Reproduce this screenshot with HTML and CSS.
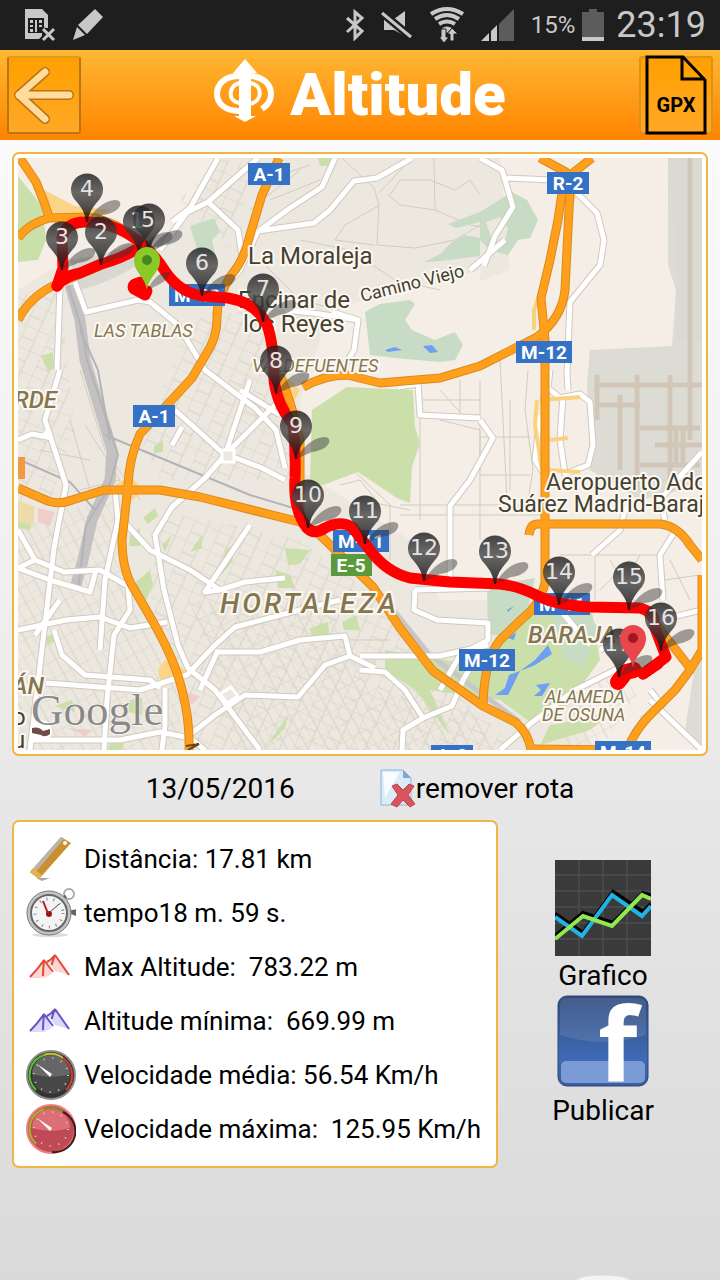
FILE: index.html
```
<!DOCTYPE html>
<html lang="pt">
<head>
    <meta charset="UTF-8">
    <meta name="viewport" content="width=device-width, initial-scale=1.0">
    <title>Altitude</title>
    <link rel="stylesheet" href="styles.css">
</head>
<body>
    <div class="status-bar">
        <div class="status-group">
            <svg class="status-icon" viewBox="0 0 32 34" aria-hidden="true">
                <path d="M1 1h17l6 6v13h-6v8l-3 3H1z" fill="#c8c8c8"/>
                <path d="M4 10h16v15H4z" fill="#1e1e1e"/>
                <path d="M6 12h3v3H6zm0 5h3v2H6zm0 4h3v3H6zm5-9h2v12h-2zm4 0h3v3h-3zm0 5h3v2h-3z" fill="#c8c8c8"/>
                <path d="M19 21l11 11M30 21L19 32" stroke="#1e1e1e" stroke-width="5"/>
                <path d="M19 21l11 11M30 21L19 32" stroke="#c8c8c8" stroke-width="3"/>
            </svg>
            <svg class="status-icon" viewBox="0 0 32 34" aria-hidden="true">
                <path d="M23 1l8 8-16 17-9-9zM5 19l8 8-12 5z" fill="#c8c8c8"/>
            </svg>
        </div>
        <div class="status-group status-right">
            <svg width="20" height="32" viewBox="0 0 20 32" aria-hidden="true">
                <path d="M2 9l15 13-7 7V3l7 6L2 23" fill="none" stroke="#c8c8c8" stroke-width="3"/>
            </svg>
            <svg width="32" height="34" viewBox="0 0 32 34" aria-hidden="true">
                <path d="M3 11h10L24 3v25L13 22H3z" fill="#c8c8c8"/>
                <path d="M0 4l31 26" stroke="#1e1e1e" stroke-width="8"/>
                <path d="M1 5l29 24" stroke="#c8c8c8" stroke-width="3"/>
            </svg>
            <svg width="36" height="38" viewBox="0 0 36 38" aria-hidden="true">
                <path d="M2 8q16-10 32 0M6 13q12-8 24 0M10 18q8-5 16 0" fill="none" stroke="#c8c8c8" stroke-width="4"/>
                <path d="M13 22q5-3 10 0l-5 5z" fill="#c8c8c8"/>
                <path d="M12 23h5v8h3l-5 6-5-6h2zM21 35v-7h-3l5-6 6 6h-4v7z" fill="#c8c8c8" stroke="#1e1e1e"/>
            </svg>
            <svg width="34" height="34" viewBox="0 0 34 34" aria-hidden="true">
                <path d="M18 16L33 1v32H18z" fill="#5c5c5c"/>
                <path d="M0 33l8-8v8zM10 23l6-6v16h-6z" fill="#c8c8c8"/>
            </svg>
            <span class="battery-level">15%</span>
            <svg width="22" height="34" viewBox="0 0 22 34" aria-hidden="true">
                <path d="M7 1h8v3h7v26H0V4h7z" fill="#5c5c5c"/>
                <path d="M0 29h22v4H0z" fill="#c8c8c8"/>
            </svg>
            <span class="clock">23:19</span>
        </div>
    </div>

    <header class="header">
        <button class="header-button" type="button" aria-label="Voltar">
            <svg width="62" height="60" viewBox="0 0 62 60" aria-hidden="true">
                <path d="M32 7L6 30l26 24M6 30h50" fill="none" stroke="#b87415" stroke-width="10" stroke-linejoin="round" stroke-linecap="round"/>
                <path d="M32 7L6 30l26 24M6 30h50" fill="none" stroke="#ffdb9c" stroke-width="7" stroke-linejoin="round" stroke-linecap="round"/>
            </svg>
        </button>
        <div class="brand">
            <svg width="60" height="64" viewBox="0 0 60 64" aria-hidden="true">
                <path d="M31 0l12 14h-6v43h5l-11 6-11-6h5V14h-6z" fill="#fff"/>
                <path d="M25 17C11 17 3 25 3 35c0 10 9 17 22 17M37 17c12 1 20 8 20 18 0 6-3 11-9 15" fill="none" stroke="#fff" stroke-width="6"/>
                <path d="M26 24c-12 2-13 19 0 20M36 24c13 2 13 18 0 21" fill="none" stroke="#fff" stroke-width="4"/>
            </svg>
            <h1>Altitude</h1>
        </div>
        <button class="header-button gpx-button" type="button" aria-label="GPX">
            <svg width="62" height="80" viewBox="0 0 62 80" aria-hidden="true">
                <path d="M2 2h36l22 23v53H2zM37 2v22h23" fill="none" stroke="#000" stroke-width="3"/>
                <text class="gpx-label" x="31" y="57">GPX</text>
            </svg>
        </button>
    </header>

    <main>
        <div class="map-frame">
            <svg class="map" viewBox="18 158 684 592" role="img" aria-label="Mapa da rota">
                <defs>
                    <linearGradient id="pin-fill" x1="0" y1="0" x2="0" y2="1">
                        <stop offset="0" stop-color="#1c1c1c"/>
                        <stop offset="0.4" stop-color="#4a4a4a"/>
                        <stop offset="1" stop-color="#0c0c0c"/>
                    </linearGradient>
                    <pattern id="blocks" width="26" height="22" patternUnits="userSpaceOnUse" patternTransform="rotate(24)">
                        <path d="M0 0h26M0 12h14M0 0v22M14 0v22" fill="none" stroke="#d8d1c6" stroke-width="1"/>
                    </pattern>
                    <pattern id="dense" width="18" height="16" patternUnits="userSpaceOnUse" patternTransform="rotate(-28)">
                        <path d="M0 0h18M0 0v16M10 0v16" fill="none" stroke="#d8d1c6" stroke-width="1"/>
                    </pattern>
                    <g id="pin">
                        <path d="M0 33C6 22 16 12 28 11c10 0 6 13-12 15z" fill="#333" opacity="0.45"/>
                        <path d="M-1 33C-2 23-6 18-11 12a16 16 0 1 1 22 0C6 18 2 23 1 33z" fill="url(#pin-fill)" opacity="0.82"/>
                    </g>
                    <g id="streets">
                        <path d="M218 158L190 208L160 250M258 158L208 202L188 212M208 202L238 230L243 262M190 208L172 222"/>
                        <path d="M335 158L322 187L290 208L260 230M412 158L377 178L354 181L330 210L314 223L258 231M258 231L240 270L222 290"/>
                        <path d="M75 282L86 312L138 300L150 302L178 325L205 370L255 408L276 430L285 468M60 286L57 370M60 370L45 420L66 485L54 548L30 750"/>
                        <path d="M18 440L32 434L52 438M44 432L50 438"/>
                        <path d="M250 380L225 455L205 478L172 507L155 535L164 590L178 645L188 668L215 690L260 750"/>
                        <path d="M172 445L182 427M228 455L262 468L285 480M175 410L225 455M280 400L225 455M240 390L280 415"/>
                        <path d="M115 490L118 520L105 580L100 650M118 515L150 550L190 570L220 590L245 582L285 578M250 525L205 592L220 590"/>
                        <path d="M18 530L35 560L18 568M35 560L64 572L100 570L128 586L130 610L114 635L107 700L104 750"/>
                        <path d="M18 630L66 620L100 617L130 628L167 622M54 630L62 655L85 675L150 680L160 688M46 683L140 690L187 675L215 645L235 627L300 610L340 600"/>
                        <path d="M218 652L260 652L300 640L345 636L350 656L375 668M165 688L165 725L162 750M188 736L215 715L245 695L298 697L325 665L350 656M200 690L218 650"/>
                        <path d="M30 740L120 740L160 732L190 738L205 750"/>
                        <path d="M18 568L50 580L70 586L90 592L96 570M60 600L35 635"/>
                        <path d="M332 312L358 320L354 350L345 365M320 314L358 320M285 310L320 314M470 270L505 240M398 387L418 384L420 415L480 418"/>
                        <path d="M480 158L502 170L505 180L513 207L495 236L484 266M507 178L550 180"/>
                        <path d="M574 190L597 213L604 240L600 265L570 302L567 375L568 390"/>
                        <path d="M480 420L493 438L470 480L450 506L450 590M550 370L548 388L560 398L580 394L590 402L593 445L588 465L565 474L560 440L563 395M540 415L535 460L545 475M702 452L675 482L660 500L665 520"/>
                        <path d="M677 528L660 555L663 600M592 555L620 530L626 505M415 590L414 610L437 620L488 623L488 640L460 655L440 690"/>
                        <path d="M415 590L490 588M360 656L440 656L488 645M360 670L385 672L405 690L423 718L452 706L463 680L475 660M423 718L403 730L402 750M500 750L530 724L575 690L635 660"/>
                        <path d="M600 650L635 630M650 700L702 750M650 690L662 705L642 720M560 610L590 645M660 620L702 610"/>
                    </g>
                    <g id="motorways">
                        <path d="M20 158L36 182L44 202L49 217M18 238Q28 224 49 218L88 217Q120 222 143 245M18 320Q30 296 57 284L143 248"/>
                        <path d="M279 158L262 195L250 235Q244 260 232 274Q216 298 217 320Q217 338 205 356L192 378L166 406L140 434Q129 458 128 486L122 540Q122 565 130 582L152 620Q175 660 182 690Q190 720 189 750"/>
                        <path d="M18 488L48 501Q60 505 72 500L104 490L160 490L200 497L300 522L320 535L373 587L400 628L433 671L483 706L515 722Q528 732 531 750"/>
                        <path d="M275 365Q290 395 300 440L300 522"/>
                        <path d="M303 387Q325 375 347 375L380 383L440 378L480 366L537 337Q562 318 565 290L570 190L566 172L540 158"/>
                        <path d="M592 158L564 180L558 220L550 260L541 298L545 340V583Q540 605 523 618L500 640Q484 660 483 706"/>
                        <path d="M529 535Q530 524 538 524H660Q678 526 690 545L702 560M702 575V650L690 670L675 690L650 715Q635 730 627 750M645 610L690 668"/>
                        <path d="M531 749L620 750"/>
                    </g>
                </defs>

                <!-- land, parks and water -->
                <rect x="18" y="158" width="684" height="592" fill="#ede8df"/>
                <path d="M18 158H215L160 250L50 270L18 290zM480 158H702V750H590L560 600H440L410 540V420L430 300L510 270L500 158z" fill="#f4eee6"/>
                <path d="M300 400L330 310L480 270V520L410 540L300 470z" fill="#f4eee6"/>
                <path class="blocks" d="M18 295L60 290L75 430L50 500H18zM190 320L250 310L290 380L290 480L160 480L140 440zM230 250L180 200L215 160H260zM160 510L300 540L380 600L440 680L520 750H200L150 600z"/>
                <path class="dense" d="M18 520L60 510L120 500L130 590L180 700L180 750H18zM190 600L330 610L370 680L420 750H230zM370 690L470 710L500 750H380zM600 670L640 690L600 750H550z"/>
                <g fill="none" stroke="#d3cbc0" stroke-width="1">
                    <path d="M342 158L374 188L379 205L377 245L415 248L455 240L480 225M379 193L410 160M380 205L345 225L335 240L375 245M390 195L400 180L430 180L455 190L470 180L480 195M434 158L435 210L400 205L388 195M435 210L470 225L500 230M260 260L300 300L340 310M300 240L350 250L395 280L440 290M270 200L320 180M265 180L310 165M250 210L300 170"/>
                    <path d="M420 415V520M440 420L480 430V540M480 380V470M500 360L507 500M528 370L525 410L533 470L528 500M480 437H530M480 475H530M510 400V490M400 505H540M400 515H545M360 500L410 510M440 390L460 412M420 400H480M460 380V415"/>
                    <path d="M80 370L105 450L140 500M70 420L90 490M90 460L40 450M85 425L120 480L80 490M560 555H660M595 555V600M640 555L620 590M350 640L390 640M330 480L355 472L390 505L390 560M340 485L360 480L380 505M610 560L640 610M670 560L690 600M665 580L700 575M600 590L630 560"/>
                </g>
                <g fill="#cbdfab">
                    <path d="M312 410L347 387L367 388L413 390L415 427L420 443L412 467L410 503L397 498L358 472L323 485L310 482z"/>
                    <path d="M18 176L42 206L46 240L38 260L18 262zM41 356L53 352L54 368L48 372zM318 158H332L328 166H320zM18 520L32 522L30 530L18 528zM154 446L163 440V452L154 453z"/>
                    <path d="M143 518L155 508L158 516L148 524zM162 545L172 535L165 552zM190 552L202 535V548zM225 550L235 544L232 562L222 574zM130 535L140 528V546H129zM136 582L150 570L153 585L145 602L138 590zM40 638L54 634L54 642L41 646z"/>
                    <path d="M55 706L72 700L75 712L60 708zM130 700L142 698V715L128 712zM110 742H124L122 750H108zM274 735L288 715L285 728L268 745zM310 628L328 622L330 640L312 638zM342 622L356 615L360 630H344zM275 570L290 575L295 588L278 588zM285 548L310 550L300 564L288 565z"/>
                    <path d="M385 650L475 665L520 610L590 600L600 660L560 715L530 722L500 700L430 690L450 735L415 690L385 670z"/>
                    <path d="M550 725L610 715L590 730L540 745z"/>
                </g>
                <g fill="#c7dbc5">
                    <path d="M365 312L380 304L410 300L415 304L405 320L412 330L435 340L455 332L463 345L455 360L440 362L395 358L370 355z"/>
                    <path d="M424 262L440 254L452 242L465 235L480 238V256L450 260L428 262zM448 224L480 212V222L456 228z"/>
                    <path d="M480 212L512 192L527 200L538 220L530 238L518 240L508 255L490 250L480 240zM190 226L214 218L220 232L212 240L216 256L198 252z"/>
                    <path d="M487 586L535 578L528 608L500 635H488zM550 608L580 600L598 628L584 665L565 660z"/>
                </g>
                <path d="M486 222L500 217L508 228L504 244L492 240z" fill="#ede8df"/>
                <g fill="#6f9ff0">
                    <path d="M385 350L395 347L402 350L388 352zM423 346L432 345L438 352L430 353zM507 610L514 606L508 612zM508 638L516 632L514 640zM548 645L552 654L535 665L520 671L535 660zM509 675L520 671L508 695L495 695L505 688zM536 685L550 683L542 696L534 696L541 690z"/>
                </g>
                <path d="M668 158H702V750L685 730L702 620V485L640 500L590 470L587 385L590 350L672 346L676 290L668 265z" fill="#dcdcd4"/>
                <path d="M668 158L676 248L676 340L702 340V158z" fill="#dadad3"/>
                <g fill="none" stroke="#d2c6b8" stroke-width="5">
                    <path d="M690 158V380M597 385H702M620 395V470M637 375V490M597 405H640M597 375V420M690 372V440M670 375V480M640 428H700M640 465H700M655 445H702M676 430V465M683 430V465"/>
                </g>
                <path d="M18 500L35 507L33 525L18 522z" fill="#eedbaa"/>
                <path d="M38 508L54 512L50 526L38 522zM185 692L200 696L192 705zM68 728L92 730L85 736z" fill="#eecdca"/>
                <path d="M44 190L75 206L110 210L85 222L55 226zM285 375L300 390L290 408L275 395zM115 485L130 476L144 490L130 502zM150 620L165 625L160 632zM158 670L165 660L190 672L160 680z" fill="#fbd488"/>

                <!-- railway -->
                <path d="M70 285L80 320L85 360L112 450L110 480L92 520L83 560L76 585" fill="none" stroke="#c3c1c2" stroke-width="11"/>
                <path d="M68 285L82 330L87 360L118 455L108 490L86 525L78 590M80 330L98 370L110 440M105 435L250 495L300 510M20 460L70 482L95 510" fill="none" stroke="#b4b3b7" stroke-width="2"/>
                <path d="M70 260Q110 255 140 240L155 252Q120 280 80 290z" fill="#d9d7d2"/>
                <path d="M365 575L430 655L520 722" fill="none" stroke="#c8c6c6" stroke-width="5"/>

                <use href="#streets" class="street-edge"/>
                <use href="#streets" class="street"/>
                <path d="M222 450h12v12h-12zM220 694L231 687L238 696L227 703z" fill="#ede8df" stroke="#fff" stroke-width="3"/>
                <g fill="none" stroke="#fbd27c" stroke-width="4">
                    <path d="M537 400L535 425L542 470M540 400L580 397M550 440L568 438M548 470L580 472M541 290L534 310V330M575 195L570 202"/>
                </g>
                <use href="#motorways" class="motorway-edge"/>
                <use href="#motorways" class="motorway"/>

                <g class="shields">
                    <rect x="248" y="163" width="42" height="22"/><text x="269" y="181">A-1</text>
                    <rect x="547" y="172" width="42" height="22"/><text x="568" y="190">R-2</text>
                    <rect x="516" y="341" width="56" height="22"/><text x="544" y="359">M-12</text>
                    <rect x="133" y="405" width="42" height="22"/><text x="154" y="423">A-1</text>
                    <rect x="169" y="284" width="56" height="22"/><text x="197" y="302">M-40</text>
                    <rect x="333" y="530" width="56" height="22"/><text x="361" y="548">M-11</text>
                    <rect x="331" y="554" width="41" height="22" class="green"/><text x="351" y="572">E-5</text>
                    <rect x="534" y="593" width="56" height="22"/><text x="562" y="611">M-11</text>
                    <rect x="459" y="649" width="56" height="22"/><text x="487" y="667">M-12</text>
                    <rect x="431" y="745" width="42" height="22"/><text x="452" y="762">A-2</text>
                    <rect x="595" y="741" width="56" height="22"/><text x="623" y="759">M-14</text>
                    <rect x="10" y="457" width="15" height="22" class="orange"/>
                </g>

                <g class="places">
                    <text x="248" y="264">La Moraleja</text>
                    <text x="238" y="308">Encinar de</text>
                    <text x="243" y="332">los Reyes</text>
                    <text class="airport" x="546" y="490">Aeropuerto Ado</text>
                    <text class="airport" x="498" y="512">Suárez Madrid-Baraj</text>
                    <text class="road-name" x="362" y="302" transform="rotate(-14 362 302)">Camino Viejo</text>
                    <text x="12" y="725">o</text>
                    <text x="12" y="748">u</text>
                </g>
                <g class="districts">
                    <text class="small" x="94" y="337">LAS TABLAS</text>
                    <text class="small" x="252" y="372">VALDEFUENTES</text>
                    <text class="small" x="545" y="703">ALAMEDA</text>
                    <text class="small" x="542" y="721">DE OSUNA</text>
                    <text x="14" y="408">RDE</text>
                    <text x="528" y="643">BARAJA</text>
                    <text x="12" y="694">ÁN</text>
                    <text class="large" x="220" y="613">HORTALEZA</text>
                </g>
                <circle cx="41" cy="731" r="11" fill="#fff"/>
                <path d="M32 728Q39 726 43 731L50 729V734Q45 738 41 735L32 733z" fill="#704c45"/>
                <path d="M186 746L199 744L188 750" fill="none" stroke="#6a4518" stroke-width="2"/>
                <text class="google" x="31" y="725">Google</text>

                <g class="route">
                    <path d="M57 286L63 268L62 238Q66 221 88 222Q120 224 143 245Q154 254 165 271Q180 293 203 296L228 298Q257 303 267 325Q274 344 274 380Q277 405 293 424Q296 450 295 478Q293 510 307 528Q314 535 325 528Q340 520 352 527L370 550Q386 572 410 578L450 582L500 584Q518 586 536 595Q555 605 590 607L640 608Q656 612 655 628L666 657L643 674"/>
                    <path d="M57 286Q64 276 80 273L101 264Q124 258 143 245"/>
                    <path d="M142 282Q130 284 134 289L145 295L147 291"/>
                    <path class="route-end" d="M634 670L626 672L618 682"/>
                    <path d="M643 674L658 664"/>
                </g>

                <g class="pins">
                    <use href="#pin" x="87" y="189"/><text x="87" y="196">4</text>
                    <use href="#pin" x="101" y="232"/><text x="101" y="239">2</text>
                    <use href="#pin" x="62" y="237"/><text x="62" y="244">3</text>
                    <use href="#pin" x="139" y="221"/><text x="137" y="228">1</text>
                    <use href="#pin" x="149" y="219"/><text x="148" y="227">5</text>
                    <use href="#pin" x="202" y="263"/><text x="202" y="270">6</text>
                    <use href="#pin" x="263" y="289"/><text x="263" y="296">7</text>
                    <use href="#pin" x="276" y="361"/><text x="276" y="368">8</text>
                    <use href="#pin" x="296" y="426"/><text x="296" y="433">9</text>
                    <use href="#pin" x="308" y="495"/><text x="308" y="502">10</text>
                    <use href="#pin" x="365" y="511"/><text x="365" y="518">11</text>
                    <use href="#pin" x="424" y="548"/><text x="424" y="555">12</text>
                    <use href="#pin" x="495" y="551"/><text x="495" y="558">13</text>
                    <use href="#pin" x="559" y="572"/><text x="559" y="579">14</text>
                    <use href="#pin" x="629" y="577"/><text x="629" y="584">15</text>
                    <use href="#pin" x="661" y="618"/><text x="661" y="625">16</text>
                    <use href="#pin" x="619" y="644"/><text x="618" y="651">17</text>
                </g>
                <path d="M147 290Q158 270 170 272Q172 280 147 290z" fill="#333" opacity="0.4"/>
                <path d="M147 290C145 276 134 273 134 260a13 13 0 0 1 26 0C160 273 149 276 147 290z" fill="#8ac926"/>
                <circle cx="147" cy="260" r="5" fill="#47861c"/>
                <path d="M633 668C631 654 620 651 620 638a13 13 0 0 1 26 0C646 651 635 654 633 668z" fill="#e9454d"/>
                <circle cx="633" cy="638" r="5" fill="#a3161d"/>
            </svg>
        </div>

        <div class="route-bar">
            <span>13/05/2016</span>
            <button class="remove-button" type="button">
                <svg width="37" height="40" viewBox="0 0 37 40" aria-hidden="true">
                    <path d="M2 2h22l8 8v27H2z" fill="#dcebf8" stroke="#8fb3d8" stroke-width="1"/>
                    <path d="M24 2v8h8z" fill="#7da9d8"/>
                    <path d="M4 4h17L6 30z" fill="#f8fbff"/>
                    <path d="M13 18l5-2 6 6 6-6 5 2-6 9 7 9-5 3-7-7-6 7-6-3 7-9z" fill="#d9545c" stroke="#b9444c" stroke-width="1"/>
                </svg>
                remover rota
            </button>
        </div>

        <div class="details">
            <ul class="stats">
                <li>
                    <svg class="stat-icon" viewBox="0 0 50 50" aria-hidden="true">
                        <path d="M10 44h14l-8 3z" fill="#aaa"/>
                        <path d="M4 38L35 3l10 6-32 36z" fill="#cb8f2c"/>
                        <path d="M4 38L35 3l3 2L7 41z" fill="#b9b5ac"/>
                        <path d="M4 38l3-4 9 7-3 4z" fill="#e3b255"/>
                        <circle cx="39" cy="9" r="2" fill="#fff"/>
                    </svg>
                    <span>Distância: 17.81 km</span>
                </li>
                <li>
                    <svg class="stat-icon" viewBox="0 0 50 50" aria-hidden="true">
                        <ellipse cx="24" cy="47" rx="18" ry="2" fill="#ddd"/>
                        <circle cx="43" cy="6" r="5" fill="none" stroke="#aaa" stroke-width="2"/>
                        <path d="M36 11l4-3M44 24l5-1v3z" stroke="#666" stroke-width="3"/>
                        <circle cx="23" cy="25" r="22" fill="#c4c4c4" stroke="#777" stroke-width="1"/>
                        <circle cx="23" cy="25" r="18" fill="#f4f4f4" stroke="#666" stroke-width="2"/>
                        <circle cx="23" cy="25" r="14" fill="none" stroke="#888" stroke-width="3" stroke-dasharray="1 6"/>
                        <path d="M23 25L33 16" stroke="#444" stroke-width="1"/>
                        <path d="M23 28L17 13" stroke="#b02020" stroke-width="2"/>
                        <circle cx="23" cy="26" r="3" fill="#a01414"/>
                    </svg>
                    <span>tempo18 m. 59 s.</span>
                </li>
                <li>
                    <svg class="stat-icon" viewBox="0 0 50 50" aria-hidden="true">
                        <path d="M4 36L18 17l8 15-8 4zM21 19L29 13l14 20-14-4z" fill="#fbd6d2"/>
                        <path d="M4 35Q12 27 18 18q-1 9-1 16M18 18l9 12M21 20q4-2 8-7-3 7-3 10M29 13l14 20" fill="none" stroke="#e04a38" stroke-width="2"/>
                    </svg>
                    <span>Max Altitude:&nbsp; 783.22 m</span>
                </li>
                <li>
                    <svg class="stat-icon" viewBox="0 0 50 50" aria-hidden="true">
                        <path d="M4 36L18 17l8 15-8 4zM21 19L29 13l14 20-14-4z" fill="#d9d9fa"/>
                        <path d="M4 35Q12 27 18 18q-1 9-1 16M18 18l9 12M21 20q4-2 8-7-3 7-3 10M29 13l14 20" fill="none" stroke="#6a50c0" stroke-width="2"/>
                    </svg>
                    <span>Altitude mínima:&nbsp; 669.99 m</span>
                </li>
                <li>
                    <svg class="stat-icon" viewBox="0 0 50 50" aria-hidden="true">
                        <circle cx="25" cy="25" r="24" fill="#333" stroke="#8c8c8c" stroke-width="2"/>
                        <circle cx="25" cy="25" r="19" fill="#474747"/>
                        <path d="M6 24a19 19 0 0 1 38 0Q25 30 6 24z" fill="#666"/>
                        <path d="M10 40A21 21 0 0 1 18 5" fill="none" stroke="#59c22d" stroke-width="2"/>
                        <path d="M18 5A21 21 0 0 1 37 8" fill="none" stroke="#c6c62c" stroke-width="2"/>
                        <path d="M37 8A21 21 0 0 1 40 40" fill="none" stroke="#e03a2a" stroke-width="2"/>
                        <circle cx="25" cy="25" r="17" fill="none" stroke="#ccc" stroke-width="2" stroke-dasharray="1 8"/>
                        <path d="M11 14L26 24l-2 3z" fill="#fff"/>
                    </svg>
                    <span>Velocidade média: 56.54 Km/h</span>
                </li>
                <li>
                    <svg class="stat-icon" viewBox="0 0 50 50" aria-hidden="true">
                        <circle cx="25" cy="25" r="24" fill="#c04b54" stroke="#f08080" stroke-width="2"/>
                        <circle cx="25" cy="25" r="19" fill="#bd4a55"/>
                        <path d="M6 24a19 19 0 0 1 38 0Q25 30 6 24z" fill="#dc6e78"/>
                        <path d="M10 40A21 21 0 0 1 18 5" fill="none" stroke="#a3b62a" stroke-width="2"/>
                        <path d="M18 5A21 21 0 0 1 37 8" fill="none" stroke="#7d9a20" stroke-width="2"/>
                        <path d="M37 8A21 21 0 0 1 26 48" fill="none" stroke="#3a1c1c" stroke-width="2"/>
                        <circle cx="25" cy="25" r="17" fill="none" stroke="#f3c3c3" stroke-width="2" stroke-dasharray="1 8"/>
                        <path d="M11 14L26 24l-2 3z" fill="#fff"/>
                    </svg>
                    <span>Velocidade máxima:&nbsp; 125.95 Km/h</span>
                </li>
            </ul>

            <div class="actions">
                <button type="button">
                    <svg width="96" height="96" viewBox="0 0 96 96" aria-hidden="true">
                        <path d="M0 0h96v96H0z" fill="#3a3a3a"/>
                        <path d="M24 0v96M48 0v96M72 0v96M0 15h96M0 31h96M0 47h96M0 63h96M0 79h96" stroke="#484848" stroke-width="2"/>
                        <path d="M0 54l28 19 30-41 30 20 8-8M0 76l28-23 30 10 30-30 8 3" fill="none" stroke="#000" stroke-width="4"/>
                        <path d="M0 57l27 19 30-41 30 21 9-10" fill="none" stroke="#1fb4e4" stroke-width="4"/>
                        <path d="M0 79l28-23 29 10 30-31 9 4" fill="none" stroke="#92e84f" stroke-width="4"/>
                    </svg>
                    <span>Grafico</span>
                </button>
                <button type="button">
                    <svg width="96" height="96" viewBox="0 0 96 96" aria-hidden="true">
                        <defs>
                            <linearGradient id="fb" x1="0" y1="0" x2="0" y2="1">
                                <stop offset="0" stop-color="#304a7c"/>
                                <stop offset="0.7" stop-color="#3f6bb5"/>
                                <stop offset="1" stop-color="#3c5c9c"/>
                            </linearGradient>
                        </defs>
                        <rect x="3" y="1" width="90" height="90" rx="9" fill="url(#fb)" stroke="#2d4778" stroke-width="1"/>
                        <path d="M5 10q0-7 7-7h72q7 0 7 7v30Q48 54 5 40z" fill="#fff" opacity="0.1"/>
                        <rect x="6" y="66" width="84" height="22" rx="5" fill="#7b9bd6"/>
                        <text class="fb-letter" x="43" y="86">f</text>
                    </svg>
                    <span>Publicar</span>
                </button>
            </div>
        </div>
    </main>
</body>
</html>
```
FILE: styles.css
```
* {
    box-sizing: border-box;
}

body {
    margin: 0;
    min-height: 100vh;
    font-family: Roboto, "Open Sans", sans-serif;
    font-size: 26px;
    color: #000;
    background: radial-gradient(ellipse 28px 5px at 603px 100%, #f4f4f4 80%, transparent), linear-gradient(#fdfdfe, #f0f0f2 45%, #e6e6e6 65%, #dadada);
}

button {
    font: inherit;
    color: inherit;
    background: none;
    border: none;
    padding: 0;
    cursor: pointer;
}

svg {
    display: block;
    flex-shrink: 0;
}

/* status bar */
.status-bar {
    display: flex;
    justify-content: space-between;
    align-items: center;
    height: 50px;
    padding: 0 14px 0 24px;
    background-color: #1e1e1e;
    color: #c8c8c8;
}

.status-group {
    display: flex;
    align-items: center;
    gap: 16px;
}

.status-right {
    gap: 16px;
}

.status-icon {
    width: 32px;
    height: 34px;
}

.battery-level {
    font-size: 24px;
    margin-right: -9px;
}

.clock {
    font-size: 36px;
    margin-left: -4px;
}

/* header */
.header {
    display: flex;
    justify-content: space-between;
    align-items: center;
    height: 90px;
    padding: 0 7px;
    background: linear-gradient(#ffb733, #ff8400);
}

.header-button {
    display: flex;
    justify-content: center;
    align-items: center;
    width: 74px;
    height: 78px;
    background: linear-gradient(#ffa000, #ffa826);
    border: 2px solid #b97712;
    border-top-color: #e09a20;
    border-radius: 3px;
}

.gpx-button {
    border-color: #e0901a;
}

.gpx-label {
    font-family: "Liberation Sans Narrow", Roboto, sans-serif;
    font-size: 20px;
    font-weight: bold;
    text-anchor: middle;
}

.brand {
    display: flex;
    align-items: flex-start;
    gap: 16px;
    color: #fff;
}

h1 {
    margin: 0;
    font-size: 60px;
    font-weight: 900;
    line-height: 72px;
}

/* map */
main {
    padding: 12px;
}

.map-frame {
    padding: 4px;
    background-color: #fff;
    border: 2px solid #f0b640;
    border-radius: 7px;
}

.map {
    width: 100%;
    height: auto;
}

.blocks {
    fill: url(#blocks);
}

.dense {
    fill: url(#dense);
}

.street, .street-edge, .motorway, .motorway-edge {
    fill: none;
    stroke-linejoin: round;
}

.street-edge {
    stroke: #cfc9c0;
    stroke-width: 7px;
}

.street {
    stroke: #fff;
    stroke-width: 5px;
}

.motorway-edge {
    stroke: #dc8a1a;
    stroke-width: 9px;
}

.motorway {
    stroke: #ff9f1c;
    stroke-width: 7px;
}

.shields rect {
    fill: #3572c6;
}

.shields .green {
    fill: #5b9a3c;
}

.shields .orange {
    fill: #f29a3f;
}

.shields text {
    font-size: 19px;
    font-weight: bold;
    fill: #fff;
    text-anchor: middle;
}

.places text, .districts text {
    font-size: 24px;
    fill: #46402f;
    stroke: #fbf8f2;
    stroke-width: 4px;
    stroke-linejoin: round;
    paint-order: stroke;
}

.places .airport {
    font-size: 23px;
}

.places .road-name {
    font-size: 18px;
}

.districts text {
    font-style: italic;
    font-weight: 500;
    fill: #85764f;
}

.districts .small {
    font-size: 18px;
    font-weight: normal;
}

.districts .large {
    font-size: 28px;
    letter-spacing: 3px;
}

.google {
    font-family: "Liberation Serif", serif;
    font-size: 45px;
    fill: #777;
    fill-opacity: 0.85;
    stroke: #fff;
    stroke-width: 1px;
    paint-order: stroke;
}

.route {
    fill: none;
    stroke: #f00;
    stroke-width: 11px;
    stroke-linecap: round;
    stroke-linejoin: round;
}

.route-end {
    stroke-width: 16px;
}

.pins text {
    font-family: "DejaVu Sans", sans-serif;
    font-size: 22px;
    fill: #e4e4e4;
    text-anchor: middle;
}

/* route info */
.route-bar {
    display: flex;
    justify-content: center;
    align-items: center;
    gap: 84px;
    height: 64px;
    font-size: 28px;
}

.remove-button {
    display: flex;
    align-items: center;
}

.details {
    display: flex;
}

.stats {
    margin: 0;
    padding: 10px 15px 10px 12px;
    list-style: none;
    background-color: #fff;
    border: 2px solid #f0b640;
    border-radius: 7px;
}

.stats li {
    display: flex;
    align-items: center;
    gap: 8px;
    height: 54px;
    white-space: nowrap;
}

.stat-icon {
    width: 50px;
    height: 50px;
}

.actions {
    flex: 1;
    display: flex;
    flex-direction: column;
    align-items: center;
    padding-top: 40px;
    font-size: 28px;
}

.actions button {
    display: flex;
    flex-direction: column;
    align-items: center;
    line-height: 39px;
}

.fb-letter {
    font-family: "Open Sans", sans-serif;
    font-size: 102px;
    font-weight: bold;
    fill: #fff;
}
```
